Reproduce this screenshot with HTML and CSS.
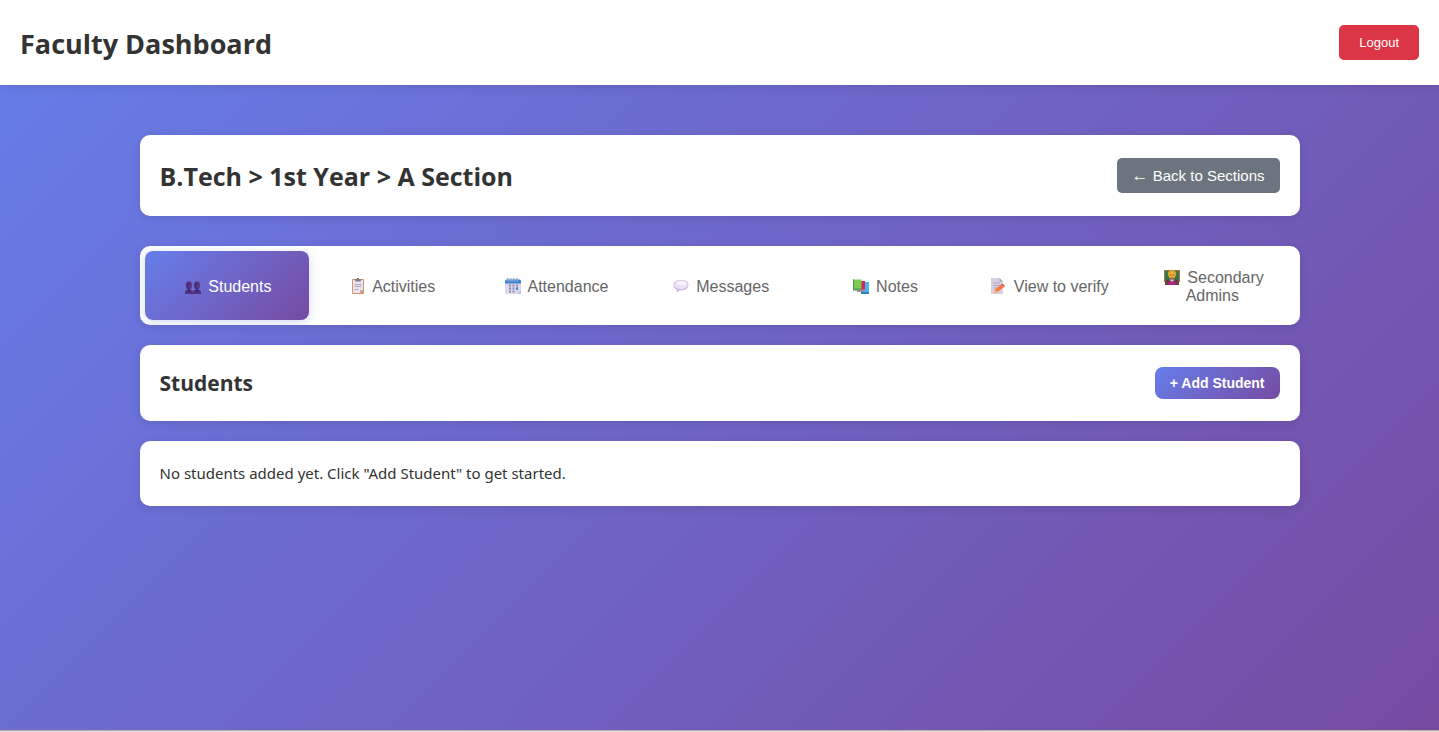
FILE: index.html
```html
<!DOCTYPE html>
<html lang="en">
<head>
<meta charset="utf-8">
<meta name="viewport" content="width=device-width, initial-scale=1">
<title>Faculty Dashboard</title>
<link rel="stylesheet" href="styles.css">
</head>
<body class="page">
<header class="topbar">
  <h1 class="topbar-title">Faculty Dashboard</h1>
  <button class="btn btn-logout" type="button">Logout</button>
</header>
<main class="container">
  <section class="card card-path">
    <h2 class="path-title">B.Tech &gt; 1st Year &gt; A Section</h2>
    <button class="btn btn-back" type="button"><span class="arrow">←</span> Back to Sections</button>
  </section>
  <nav class="tabs" aria-label="Section tools">
    <button class="tab tab-active" type="button"><svg class="icon" viewBox="-3 0 22 16" aria-hidden="true"><path d="M0 16v-2q.3-2 2.500-2.300h3Q8 12 8 14v2z M8 16v-2q.3-2 2.500-2.300h3Q16 12 16 14v2z" fill="#4d3084"/><path d="M3 11h2v3H3z M11 11h2v3h-2z" fill="#3c2569"/><ellipse cx="4" cy="7.500" rx="3" ry="4" fill="#4a2e7c"/><ellipse cx="12" cy="7.500" rx="3" ry="4" fill="#4a2e7c"/><path d="M4.500 3.500Q7 4 7 7.500t-2.500 4z M12.500 3.500Q15 4 15 7.500t-2.500 4z" fill="#65408d" opacity=".6"/></svg> Students</button>
    <button class="tab" type="button"><svg class="icon" viewBox="-3 0 22 16" aria-hidden="true"><rect x="2" y="1" width="12" height="15" rx=".7" fill="#dc9468"/><path d="M3 2h10v10l-3 3H3z" fill="#e9e2f1"/><path d="M10 15v-3h3z" fill="#b9a9c8"/><path d="M5 2.500V1h2V0h2v1h2v1.500q0 1-1 1H6q-1 0-1-1z" fill="#827d92"/><path d="M4.500 6.500h7M4.500 8.500h7M4.500 11.500h4" stroke="#b4a9c2"/></svg> Activities</button>
    <button class="tab" type="button"><svg class="icon" viewBox="-3 0 22 16" aria-hidden="true"><rect y="2" width="16" height="14" rx="1.500" fill="#ddd8ee"/><path d="M0 5.500V3q0-1.500 1.500-1.500h13Q16 1.500 16 3v2.500z" fill="#3c83d0"/><path d="M2 3.500V1q1-1.500 1.500 0v2.500M5 3.500V1q1-1.500 1.500 0v2.500M8 3.500V1q1-1.500 1.500 0v2.500M11 3.500V1q1-1.500 1.500 0v2.500" stroke="#86a9d2" fill="none"/><path d="M4 7.500h2M7.500 7.500h2M11 7.500h2M4 10.500h2M7.500 10.500h2M4 13.500h2M7.500 13.500h2" stroke="#8d8aab" stroke-width="1.800"/><path d="M11 10.500h2" stroke="#2785dc" stroke-width="2.500"/><path d="M12 16l4-4v2.500q0 1.500-1.500 1.500z" fill="#b9c3e5"/></svg> Attendance</button>
    <button class="tab" type="button"><svg class="icon" viewBox="-3 0 22 16" aria-hidden="true"><path d="M8 2q7.500 0 7.500 5T8 12.500H6.500Q5 14 3 14q1-1 .7-2.300Q.5 10 .5 7 .5 2 8 2z" fill="#cdbce5"/><ellipse cx="8" cy="6.700" rx="6.800" ry="4.200" fill="#ebe2f5"/><ellipse cx="8.500" cy="5" rx="4.500" ry="2" fill="#f8f3fb"/></svg> Messages</button>
    <button class="tab" type="button"><svg class="icon" viewBox="-3 0 22 16" aria-hidden="true"><path d="M8 4h8v11.500H8z" fill="#47b7ea"/><path d="M8 14h8v2H8z" fill="#2682c0"/><path d="M4 3h8v10.500H4z" fill="#d72560"/><path d="M4 11.500h8v2H4z" fill="#a98da9"/><path d="M0 1.500h8.500V11H0z" fill="#7dcc50"/><path d="M0 1.500h1V12H0z" fill="#3d9850"/><path d="M0 10.500h8.500v2H0z" fill="#5d9861"/></svg> Notes</button>
    <button class="tab" type="button"><svg class="icon" viewBox="-3 0 22 16" aria-hidden="true"><path d="M1 0h8.500L13 3.500V16H1z" fill="#d8d0e2"/><path d="M9.500 0v3.500H13z" fill="#aba0bb"/><path d="M3 5h7M3 7.500h7M3 10h5" stroke="#b4aac0"/><path d="M4 15l1-3.500L11 6.500l3 2.500-6.500 5z" fill="#f47b39"/><path d="M11 6.500l1.500-1L15 8l-1 1z" fill="#e54b62"/><path d="M4 15l1-3.500L7.500 14z" fill="#f3ba80"/></svg> View to verify</button>
    <button class="tab" type="button"><svg class="icon" viewBox="-3 0 22 16" aria-hidden="true"><path d="M0 1h16v12H0z" fill="#ad7047"/><path d="M1 2h14v10H1z" fill="#34794c"/><path d="M1 16v-2.500Q1.500 10 5 10h6q3.500 0 4 3.500V16z" fill="#663f47"/><path d="M5 10.500h6L8 13z" fill="#d8b7bd"/><path d="M4.500 12.500L8 13.500l3.500-1V16h-7z" fill="#b82080"/><path d="M8 13.500V16" stroke="#d018d0"/><circle cx="8" cy="5" r="4.200" fill="#dca329"/><ellipse cx="8" cy="6.300" rx="3" ry="3.200" fill="#f8b53a"/><path d="M5.500 6h2M8.500 6h2" stroke="#875d2b"/><path d="M6.800 8.300h2.400" stroke="#b55b29"/></svg> Secondary Admins</button>
  </nav>
  <section class="card card-students">
    <h3 class="students-title">Students</h3>
    <button class="btn btn-add" type="button">+ Add Student</button>
  </section>
  <section class="card card-empty">
    <p class="empty-text">No students added yet. Click "Add Student" to get started.</p>
  </section>
</main>
<div class="page-edge"></div>
</body>
</html>
```
FILE: styles.css
```css
* {
  box-sizing: border-box;
}

.page {
  display: flex;
  flex-direction: column;
  min-height: 100vh;
  margin: 0;
  color: #333;
  font-family: "Segoe UI", "Open Sans", "Noto Sans", sans-serif;
  background: linear-gradient(135deg, #667eea 0%, #764ba2 100%);
}

.topbar {
  display: flex;
  align-items: center;
  justify-content: space-between;
  padding: 20px;
  background: #fff;
  box-shadow: 0 2px 10px rgba(0, 0, 0, 0.1);
}

.topbar-title {
  margin: 0;
  padding-top: 2px;
  font-size: 27px;
  font-weight: 700;
  line-height: 43px;
}

.container {
  flex: 1;
  width: 100%;
  max-width: 1200px;
  margin: 0 auto;
  padding: 50px 20px 20px;
}

.card {
  display: flex;
  align-items: center;
  justify-content: space-between;
  margin-bottom: 20px;
  padding: 20px;
  background: #fff;
  border-radius: 10px;
  box-shadow: 0 2px 10px rgba(0, 0, 0, 0.1);
}

.card-path {
  margin-bottom: 30px;
}

.path-title {
  margin: 0;
  padding-top: 2px;
  font-size: 25px;
  font-weight: 700;
  line-height: 39px;
}

.students-title {
  margin: 0;
  font-size: 21px;
  font-weight: 700;
  line-height: 36px;
}

.empty-text {
  margin: 0;
  font-family: "Segoe UI", "Noto Sans", "Open Sans", sans-serif;
  font-size: 15px;
  line-height: 25px;
}

.btn {
  border: 0;
  border-radius: 5px;
  color: #fff;
  font-family: "Liberation Sans", Arial, sans-serif;
  cursor: pointer;
}

.btn-logout {
  padding: 10px 20px;
  background: #dc3545;
  font-size: 13px;
  line-height: 15px;
}

.btn-back {
  padding: 9px 15px;
  background: #6c757d;
  font-size: 15px;
  line-height: 17px;
}

.arrow {
  font-size: 17px;
  line-height: 1;
}

.btn-add {
  padding: 8px 15px;
  border-radius: 8px;
  background: linear-gradient(135deg, #667eea 0%, #764ba2 100%);
  font-size: 14px;
  font-weight: 700;
  line-height: 16px;
}

.tabs {
  display: flex;
  margin-bottom: 20px;
  padding: 5px;
  background: #fff;
  border-radius: 10px;
  box-shadow: 0 2px 10px rgba(0, 0, 0, 0.1);
}

.tab {
  flex: 1 1 0;
  min-width: 0;
  min-height: 69px;
  padding: 17px 20px 15px;
  border: 0;
  border-radius: 8px;
  background: transparent;
  color: #666;
  font-family: "Liberation Sans", Arial, sans-serif;
  font-size: 16px;
  line-height: 18px;
  cursor: pointer;
}

.tab-active {
  background: linear-gradient(135deg, #667eea 0%, #764ba2 100%);
  box-shadow: 0 2px 10px rgba(102, 126, 234, 0.3);
  color: #fff;
}

.icon {
  width: 22px;
  height: 16px;
  vertical-align: -2px;
}

.page-edge {
  height: 2px;
  background: #e4ddd8;
  border-top: 1px solid #b9aba6;
}
```
